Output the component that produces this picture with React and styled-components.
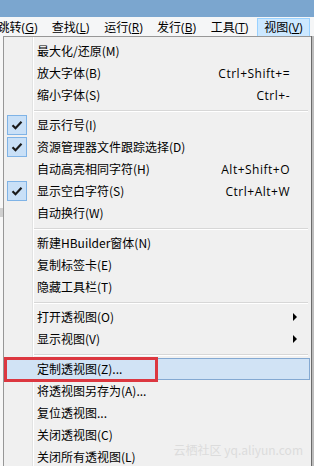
import React from "react";
import styled, { createGlobalStyle } from "styled-components";

const Global = createGlobalStyle`
  html, body { margin: 0; padding: 0; }
  body {
    width: 314px; height: 466px; overflow: hidden; background: #f0f0f0;
    font-family: "Segoe UI", "Open Sans", "Noto Sans CJK SC", sans-serif;
    font-size: 12px; color: #000;
  }
`;

const Screen = styled.div`
  width: 314px; height: 466px; display: flex; flex-direction: column; overflow: hidden;
`;

const TitleBar = styled.div`
  height: 17px; flex: none; background: #7ba6cf;
`;

const MenuBar = styled.div`
  height: 19px; flex: none; display: flex; align-items: stretch; overflow: hidden;
  background: #f5f6f7; padding-top: 1px; box-sizing: border-box;
  font-family: "Open Sans", "Noto Sans CJK SC", sans-serif; font-size: 12px;
`;

const BarItem = styled.div`
  flex: none; width: 53px; white-space: nowrap; text-align: center;
  margin-left: ${p => p.$shift || 0}px;
  line-height: 17px; box-sizing: border-box;
  background: ${p => (p.$active ? "#cce8ff" : "transparent")};
  border: 1px solid ${p => (p.$active ? "#99d1ff" : "transparent")};
  border-bottom: none;
  u { text-decoration: underline; text-underline-offset: 1px; }
`;

const Body = styled.div`
  flex: 1; display: flex; min-height: 0;
`;

const LeftStrip = styled.div`
  width: 3px; flex: none;
  background: linear-gradient(#f7f7f7 0 40%, #cfcfcf 40% 42%, #f7f7f7 42% 100%);
`;

const RightStrip = styled.div`
  width: 3px; flex: none;
  background: linear-gradient(90deg, #6b6b6b 0 1px, #bdbdbd 1px 3px);
`;

const Menu = styled.div`
  position: relative; flex: 1; background: #f0f0f0;
  border-left: 1px solid #979797; border-top: 1px solid #979797;
  padding-top: 3px; display: flex; flex-direction: column;
  &::before {
    content: ""; position: absolute; left: 28px; top: 0; bottom: 0;
    width: 1px; background: #e2e3e3; box-shadow: 1px 0 0 #ffffff;
  }
`;

const Row = styled.div`
  position: relative; height: 22px; flex: none; display: flex; align-items: center;
  box-sizing: border-box; margin-right: 1px;
  background: ${p => (p.$hover ? "#d1e3f5" : "transparent")};
  border: 1px solid ${p => (p.$hover ? "#84a9d2" : "transparent")};
`;

const Gutter = styled.div`
  width: 28px; flex: none; height: 100%; display: flex; align-items: center;
  padding-left: 1px; box-sizing: border-box;
`;

const CheckBox = styled.div`
  width: 20px; height: 20px; box-sizing: border-box; margin-left: 1px;
  background: #c9e0f7; border: 1px solid #7fb3e6;
  display: flex; align-items: center; justify-content: center;
`;

const Label = styled.span`
  padding-left: 4px; white-space: nowrap;
  font-family: "Noto Sans CJK SC", sans-serif; font-size: 12px; line-height: 20px;
`;

const Shortcut = styled.span`
  margin-left: auto; padding-right: 19px; white-space: nowrap;
  font-family: "Segoe UI", "Open Sans", sans-serif; font-size: 12px; letter-spacing: 0.5px;
`;

const Arrow = styled.span`
  margin-left: auto; margin-right: 12px; width: 0; height: 0;
  border-top: 4px solid transparent; border-bottom: 4px solid transparent;
  border-left: 4px solid #000;
`;

const Separator = styled.div`
  height: 8px; flex: none; display: flex; align-items: center; padding-left: 29px; margin-right: 3px;
  &::after { content: ""; flex: 1; height: 1px; background: #d7d7d7; box-shadow: 0 1px 0 #fff; }
`;

const RedBox = styled.div`
  position: absolute; left: -1px; top: -2px; width: 154px; height: 25px;
  border: 3px solid #dc3740; box-sizing: border-box; pointer-events: none;
`;

const Watermark = styled.div`
  position: absolute; right: 8px; bottom: 8px; color: #dcdcdc;
  font-family: "Noto Sans CJK SC", sans-serif; font-size: 12px; pointer-events: none;
`;

const Check = () => (
  <svg width="12" height="10" viewBox="0 0 12 10">
    <path d="M1.5 5.2 L4.5 8.2 L10.5 1.8" fill="none" stroke="#1a1a1a" strokeWidth="2.2" />
  </svg>
);

const items = [
  { label: "最大化/还原(M)" },
  { label: "放大字体(B)", shortcut: "Ctrl+Shift+=" },
  { label: "缩小字体(S)", shortcut: "Ctrl+-" },
  { sep: true },
  { label: "显示行号(I)", checked: true },
  { label: "资源管理器文件跟踪选择(D)", checked: true },
  { label: "自动高亮相同字符(H)", shortcut: "Alt+Shift+O" },
  { label: "显示空白字符(S)", checked: true, shortcut: "Ctrl+Alt+W" },
  { label: "自动换行(W)" },
  { sep: true },
  { label: "新建HBuilder窗体(N)" },
  { label: "复制标签卡(E)" },
  { label: "隐藏工具栏(T)" },
  { sep: true },
  { label: "打开透视图(O)", sub: true },
  { label: "显示视图(V)", sub: true },
  { sep: true },
  { label: "定制透视图(Z)...", hover: true, red: true },
  { label: "将透视图另存为(A)..." },
  { label: "复位透视图..." },
  { label: "关闭透视图(C)" },
  { label: "关闭所有透视图(L)" },
];

const bar = [
  { t: "跳转", k: "G", shift: -9 },
  { t: "查找", k: "L" },
  { t: "运行", k: "R" },
  { t: "发行", k: "B" },
  { t: "工具", k: "T" },
  { t: "视图", k: "V", active: true, shift: 1 },
];

export default function App() {
  return (
    <Screen>
      <Global />
      <TitleBar />
      <MenuBar>
        {bar.map((b, i) => (
          <BarItem key={i} $shift={b.shift} $active={b.active}>
            {b.t}(<u>{b.k}</u>)
          </BarItem>
        ))}
      </MenuBar>
      <Body>
        <LeftStrip />
        <Menu>
          {items.map((it, i) =>
            it.sep ? (
              <Separator key={i} />
            ) : (
              <Row key={i} $hover={it.hover}>
                <Gutter>{it.checked && <CheckBox><Check /></CheckBox>}</Gutter>
                <Label>{it.label}</Label>
                {it.shortcut && <Shortcut>{it.shortcut}</Shortcut>}
                {it.sub && <Arrow />}
                {it.red && <RedBox />}
              </Row>
            )
          )}
          <Watermark>云栖社区 yq.aliyun.com</Watermark>
        </Menu>
        <RightStrip />
      </Body>
    </Screen>
  );
}
